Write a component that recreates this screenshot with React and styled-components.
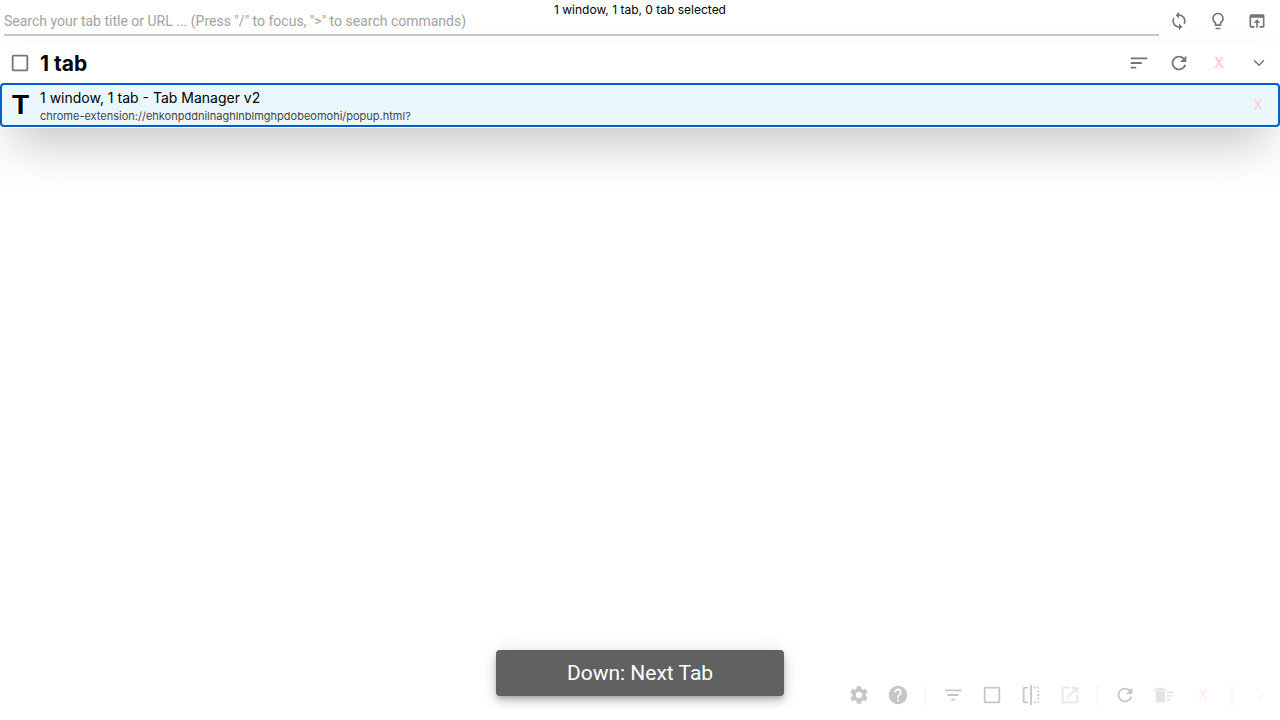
import React from 'react';
import styled, { createGlobalStyle } from 'styled-components';
import {
  MdSync, MdLightbulbOutline, MdOpenInBrowser, MdSort, MdRefresh,
  MdCheckBoxOutlineBlank, MdSettings, MdHelp, MdFilterList, MdFlip, MdLaunch,
  MdDeleteSweep,
} from 'react-icons/md';
import { ChevronDown, ChevronRight } from 'lucide-react';

const GlobalStyle = createGlobalStyle`
  * { box-sizing: border-box; }
  body { margin: 0; background: #fff; color: #000; font-family: Inter, sans-serif; }
`;

const Page = styled.div`
  min-height: 100vh;
  display: flex;
  flex-direction: column;
  position: relative;
  overflow: hidden;
`;

const Summary = styled.p`
  position: absolute;
  top: 0;
  left: 0;
  right: 0;
  margin: 0;
  text-align: center;
  font-size: 12px;
  line-height: 20px;
  pointer-events: none;
`;

const SearchBar = styled.header`
  display: flex;
  align-items: center;
  height: 43px;
  padding: 0 4px 1px;
`;

const SearchInput = styled.input`
  flex: 1;
  min-width: 0;
  height: 30px;
  padding: 2px 0 0;
  border: 0;
  border-bottom: 2px solid #c8c8c8;
  outline: 0;
  background: transparent;
  font: 14px/20px Roboto, sans-serif;
  &::placeholder { color: #a2a2a2; opacity: 1; }
`;

const IconButton = styled.button`
  display: flex;
  align-items: center;
  justify-content: center;
  width: ${(p) => p.$width || 39}px;
  height: 40px;
  padding: 0;
  border: 0;
  background: none;
  color: ${(p) => p.$color || '#757575'};
  svg { width: ${(p) => p.$size || 22}px; height: ${(p) => p.$size || 22}px; }
`;

const CloseButton = styled(IconButton)`
  color: ${(p) => p.$color || '#ffd4d4'};
  font: ${(p) => (p.$bold ? 800 : 600)} 14px/20px Inter, sans-serif;
  text-transform: uppercase;
`;

const WindowCard = styled.section`
  box-shadow: 0 25px 50px -12px rgba(0, 0, 0, 0.25);
  padding-bottom: 1px;
  background: #fff;
`;

const WindowHeader = styled.div`
  display: flex;
  align-items: center;
  height: 40px;
  padding-right: 1px;
`;

const WindowTitle = styled.h1`
  flex: 1;
  margin: 0;
  padding-top: 1px;
  font-size: 21px;
  line-height: 28px;
  font-weight: 700;
`;

const TabRow = styled.div`
  display: flex;
  align-items: center;
  height: 44px;
  border: 2px solid #005fcc;
  border-radius: 4px;
  background: #eaf7ff;
`;

const Favicon = styled.span`
  width: 38px;
  padding-right: 1px;
  text-align: center;
  font: 700 28px/40px 'Liberation Sans', sans-serif;
`;

const TabText = styled.a`
  flex: 1;
  padding-top: 2px;
  color: #000;
  text-decoration: none;
`;

const TabTitle = styled.div`
  font-size: 14px;
  line-height: 20px;
`;

const TabUrl = styled.div`
  color: #444;
  font-size: 11px;
  line-height: 16px;
`;

const BottomBar = styled.footer`
  display: flex;
  align-items: center;
  justify-content: flex-end;
  margin-top: auto;
  height: 50px;
`;

const Divider = styled.span`
  width: 2px;
  height: 20px;
  margin: 0 ${(p) => p.$gap || 7}px;
  background: #f8f8f8;
`;

const Toast = styled.div`
  position: absolute;
  bottom: 24px;
  left: 50%;
  transform: translateX(-50%);
  width: 288px;
  padding: 8px 16px;
  border-radius: 4px;
  background: #616161;
  color: #fff;
  text-align: center;
  font: 400 21px/30px Roboto, sans-serif;
  box-shadow: 0 3px 5px -1px rgba(0, 0, 0, 0.2), 0 6px 10px rgba(0, 0, 0, 0.14), 0 1px 18px rgba(0, 0, 0, 0.12);
`;

const muted = '#c6c6c6';

export default function App() {
  return (
    <Page>
      <GlobalStyle />
      <SearchBar>
        <SearchInput
          type="text"
          aria-label="Search tabs"
          placeholder={'Search your tab title or URL ... (Press "/" to focus, ">" to search commands)'}
        />
        <IconButton $size={20} aria-label="Sync"><MdSync /></IconButton>
        <IconButton $size={20} aria-label="Toggle theme"><MdLightbulbOutline /></IconButton>
        <IconButton $size={20} aria-label="Open in own window"><MdOpenInBrowser /></IconButton>
      </SearchBar>
      <Summary>1 window, 1 tab, 0 tab selected</Summary>

      <WindowCard>
        <WindowHeader>
          <IconButton $width={40} aria-label="Select window"><MdCheckBoxOutlineBlank /></IconButton>
          <WindowTitle>1 tab</WindowTitle>
          <IconButton $width={40} aria-label="Sort tabs"><MdSort /></IconButton>
          <IconButton $width={40} aria-label="Reload tabs"><MdRefresh /></IconButton>
          <CloseButton $width={40} $bold aria-label="Close window">x</CloseButton>
          <IconButton $width={40} $size={18} aria-label="Collapse window"><ChevronDown /></IconButton>
        </WindowHeader>
        <TabRow>
          <Favicon>T</Favicon>
          <TabText href="#">
            <TabTitle>1 window, 1 tab - Tab Manager v2</TabTitle>
            <TabUrl>chrome-extension://ehkonpddnilnaghlnblmghpdobeomohi/popup.html?</TabUrl>
          </TabText>
          <CloseButton $width={40} aria-label="Close tab">x</CloseButton>
        </TabRow>
      </WindowCard>

      <BottomBar>
        <IconButton $color={muted} aria-label="Settings"><MdSettings /></IconButton>
        <IconButton $color={muted} aria-label="Help"><MdHelp /></IconButton>
        <Divider />
        <IconButton $color={muted} aria-label="Group tabs"><MdFilterList /></IconButton>
        <IconButton $color={muted} aria-label="Select all"><MdCheckBoxOutlineBlank /></IconButton>
        <IconButton $color={muted} aria-label="Invert selection"><MdFlip /></IconButton>
        <IconButton $color="#e7e7e7" aria-label="Open in new window"><MdLaunch /></IconButton>
        <Divider />
        <IconButton $color={muted} aria-label="Reload"><MdRefresh /></IconButton>
        <IconButton $color="#e3e3e3" aria-label="Clean duplicates"><MdDeleteSweep /></IconButton>
        <CloseButton $width={40} $color="#ffeeee" aria-label="Close selected">x</CloseButton>
        <Divider $gap={8} />
        <IconButton $size={18} $color="#f7f7f7" aria-label="More"><ChevronRight /></IconButton>
      </BottomBar>
      <Toast role="status">Down: Next Tab</Toast>
    </Page>
  );
}
